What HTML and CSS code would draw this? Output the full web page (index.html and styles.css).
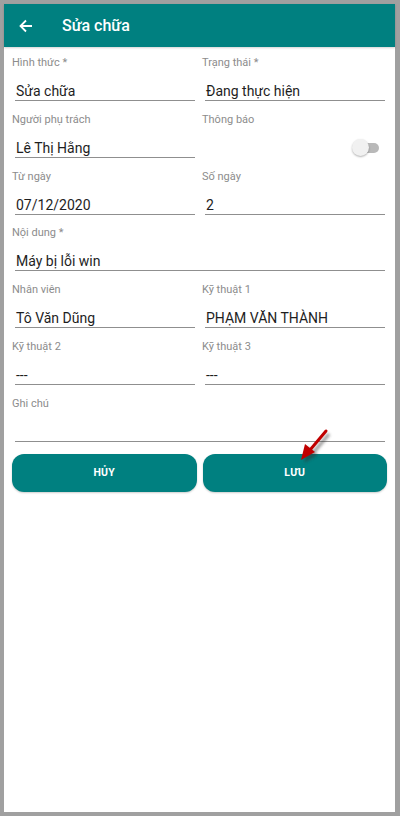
FILE: index.html
```html
<!DOCTYPE html>
<html lang="vi">
<head>
<meta charset="utf-8">
<link rel="stylesheet" href="styles.css">
</head>
<body>
<div class="screen">
  <header class="appbar">
    <svg class="back" width="16" height="16" viewBox="0 0 16 16"><path d="M14 8H2.5M8 2.5L2.5 8L8 13.5" fill="none" stroke="#fff" stroke-width="1.8"/></svg>
    <h1 class="title">Sửa chữa</h1>
  </header>
  <main class="form">
    <div class="grid">
      <div class="field"><div class="label">Hình thức *</div><div class="value">Sửa chữa</div></div>
      <div class="field"><div class="label">Trạng thái *</div><div class="value">Đang thực hiện</div></div>
      <div class="field"><div class="label">Người phụ trách</div><div class="value">Lê Thị Hằng</div></div>
      <div class="field"><div class="label">Thông báo</div><div class="value noline"><span class="toggle"><span class="thumb"></span></span></div></div>
      <div class="field"><div class="label">Từ ngày</div><div class="value">07/12/2020</div></div>
      <div class="field"><div class="label">Số ngày</div><div class="value">2</div></div>
      <div class="field wide"><div class="label">Nội dung *</div><div class="value">Máy bị lỗi win</div></div>
      <div class="field"><div class="label">Nhân viên</div><div class="value">Tô Văn Dũng</div></div>
      <div class="field"><div class="label">Kỹ thuật 1</div><div class="value">PHẠM VĂN THÀNH</div></div>
      <div class="field"><div class="label">Kỹ thuật 2</div><div class="value">---</div></div>
      <div class="field"><div class="label">Kỹ thuật 3</div><div class="value">---</div></div>
      <div class="field wide"><div class="label">Ghi chú</div><div class="value"></div></div>
    </div>
    <div class="actions">
      <button class="btn">HỦY</button>
      <button class="btn">LƯU</button>
    </div>
  </main>
  <svg class="pointer" width="44" height="44" viewBox="0 0 44 44">
    <defs><filter id="sh" x="-50%" y="-50%" width="200%" height="200%"><feGaussianBlur stdDeviation="1.6"/></filter></defs>
    <g transform="translate(3,3)" opacity="0.5" filter="url(#sh)">
      <path d="M29 4L13 23" stroke="#333" stroke-width="3.2" fill="none"/>
      <path d="M4 33L8 17L18 25Z" fill="#333"/>
    </g>
    <path d="M29 4L13 23" stroke="#c00000" stroke-width="3" stroke-linecap="round" fill="none"/>
    <path d="M4 33L8 17L18 25Z" fill="#c00000"/>
  </svg>
</div>
</body>
</html>
```

FILE: styles.css
```css
* { box-sizing: border-box; }
html, body { margin: 0; padding: 0; }
body {
  background: #a0a0a0;
  width: 400px;
  height: 816px;
  padding: 4px 5px 4px 4px;
  font-family: Roboto, "Noto Sans", sans-serif;
}
.screen {
  position: relative;
  background: #fff;
  height: 808px;
  width: 391px;
}
.appbar {
  height: 43px;
  background: #008080;
  display: flex;
  align-items: center;
  padding-left: 14px;
  box-shadow: 0 1px 2px rgba(0,0,0,0.18);
}
.back { display: block; margin-right: 28px; }
.title {
  margin: 0;
  color: #fff;
  font-size: 16px;
  font-weight: 500;
}
.form { padding: 9px 10px 0 11px; }
.grid {
  display: grid;
  grid-template-columns: 180px 180px;
  column-gap: 10px;
}
.field { padding-bottom: 11.8px; }
.field.wide { grid-column: 1 / span 2; }
.label {
  margin-left: -3px;
  height: 14px;
  line-height: 14px;
  font-size: 11px;
  color: #8c8c8c;
}
.value {
  margin-top: 10px;
  height: 21px;
  line-height: 22px;
  font-size: 14px;
  color: #1e1e1e;
  padding-left: 1px;
  border-bottom: 1px solid #8f8f8f;
}
.value.noline { border-bottom-color: transparent; position: relative; }
.toggle {
  position: absolute;
  right: 6px;
  top: 6px;
  width: 22px;
  height: 10px;
  border-radius: 5px;
  background: #b9b9b9;
}
.thumb {
  position: absolute;
  left: -5px;
  top: -3.5px;
  width: 17px;
  height: 17px;
  border-radius: 50%;
  background: #f1f1f1;
  box-shadow: 0 1px 2px rgba(0,0,0,0.3);
}
.actions {
  display: flex;
  gap: 6px;
  margin-left: -3px;
  margin-right: -2px;
}
.btn {
  flex: 1;
  height: 38px;
  border: none;
  border-radius: 12px;
  background: #008080;
  color: #fff;
  font-family: Roboto, "Noto Sans", sans-serif;
  font-size: 10.5px;
  font-weight: 700;
  letter-spacing: 0.3px;
  box-shadow: 0 1px 2px rgba(0,0,0,0.2);
}
.pointer {
  position: absolute;
  left: 293px;
  top: 423px;
}
```
